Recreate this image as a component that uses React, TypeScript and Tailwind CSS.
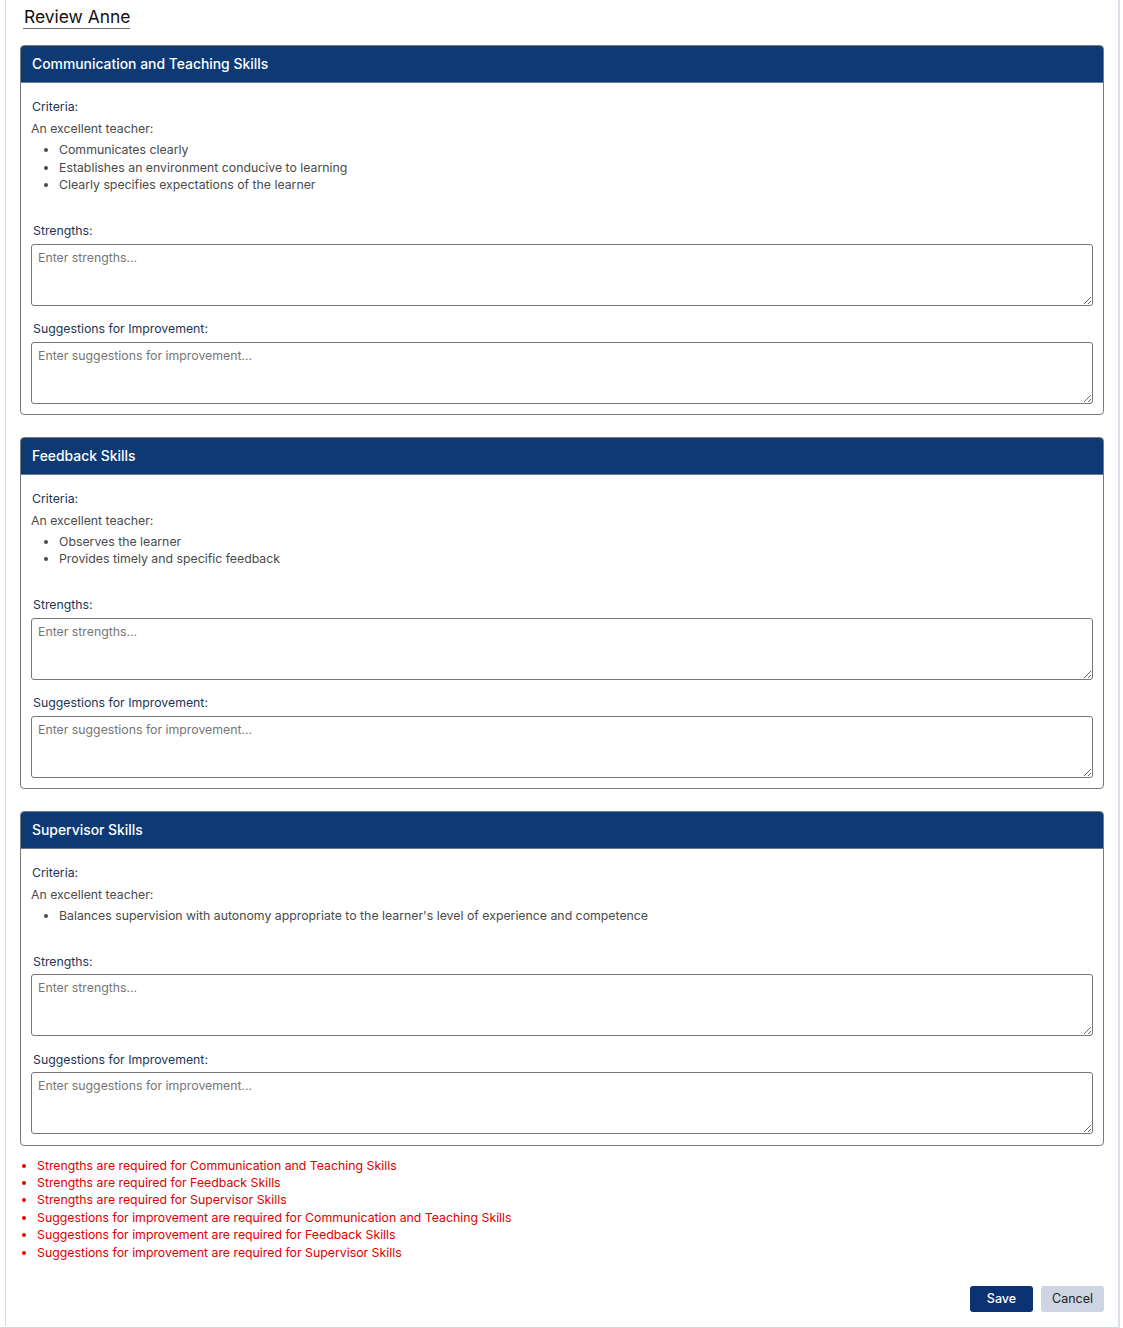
import React from "react";

type Section = { title: string; items: string[] };

const sections: Section[] = [
  {
    title: "Communication and Teaching Skills",
    items: [
      "Communicates clearly",
      "Establishes an environment conducive to learning",
      "Clearly specifies expectations of the learner",
    ],
  },
  {
    title: "Feedback Skills",
    items: ["Observes the learner", "Provides timely and specific feedback"],
  },
  {
    title: "Supervisor Skills",
    items: [
      "Balances supervision with autonomy appropriate to the learner's level of experience and competence",
    ],
  },
];

const errors = [
  "Strengths are required for Communication and Teaching Skills",
  "Strengths are required for Feedback Skills",
  "Strengths are required for Supervisor Skills",
  "Suggestions for improvement are required for Communication and Teaching Skills",
  "Suggestions for improvement are required for Feedback Skills",
  "Suggestions for improvement are required for Supervisor Skills",
];

function Card({ s }: { s: Section }) {
  return (
    <div className="border border-[#7a7a7a] rounded-[4px] overflow-hidden">
      <div className="bg-[#0d3a75] h-[37px] flex items-center px-[11px] border-b border-[#6f7a88]">
        <span className="text-white text-[13.9px] font-medium leading-[18px]">{s.title}</span>
      </div>
      <div className="px-[10px] pt-[15px] pb-[10.5px]">
        <div className="px-[1px] text-[12.3px] leading-[17.5px] text-[#1b3558]">Criteria:</div>
        <div className="mt-[4.5px] text-[12.3px] leading-[17.5px] text-[#4a4a4a]">An excellent teacher:</div>
        <ul className="mt-[3.5px] list-disc pl-[28px] text-[12.3px] leading-[17.5px] text-[#4a4a4a] marker:text-[#4a4a4a]">
          {s.items.map((it) => (
            <li key={it}>{it}</li>
          ))}
        </ul>
        <div className="mt-[28.5px] px-[2px] text-[12.3px] leading-[17.5px] text-[#1b3558]">Strengths:</div>
        <textarea
          className="mt-[4px] block w-full h-[62px] border border-[#767676] rounded-[3px] px-[6px] py-[4px] text-[12.3px] leading-[17.5px] text-[#222] placeholder:text-[#767676] outline-none"
          placeholder="Enter strengths..."
        />
        <div className="mt-[14.5px] px-[2px] text-[12.3px] leading-[17.5px] text-[#1b3558]">
          Suggestions for Improvement:
        </div>
        <textarea
          className="mt-[4px] block w-full h-[62px] border border-[#767676] rounded-[3px] px-[6px] py-[4px] text-[12.3px] leading-[17.5px] text-[#222] placeholder:text-[#767676] outline-none"
          placeholder="Enter suggestions for improvement..."
        />
      </div>
    </div>
  );
}

export default function App() {
  return (
    <div
      className="flex w-[1123px] bg-white"
      style={{ fontFamily: "Inter, 'Noto Sans', 'Liberation Sans', sans-serif" }}
    >
      <div className="w-[1118px] border-b border-[#d3d9e2]">
        <div className="ml-[5px] border-l border-[#d3d9e2] pr-[14px] pb-[14px]">
          <div className="pl-[17px] pt-[5px]">
            <h2 className="inline-block text-[17.4px] leading-[22px] font-normal text-[#111] border-b border-[#6b6b6b] pl-[1px]">
              Review Anne
            </h2>
          </div>
          <div className="pl-[14px] mt-[16px] flex flex-col gap-[21.5px]">
            {sections.map((s) => (
              <Card key={s.title} s={s} />
            ))}
          </div>
          <ul className="ml-[14px] mt-[11px] list-disc pl-[17px] text-[12.3px] leading-[17.4px] text-[#e00000] marker:text-[#e00000]">
            {errors.map((e) => (
              <li key={e}>{e}</li>
            ))}
          </ul>
          <div className="mt-[25px] flex justify-end gap-[8px]">
            <button className="w-[63px] h-[26px] rounded-[3px] bg-[#0b3272] text-white text-[12.5px] font-medium">
              Save
            </button>
            <button className="w-[63px] h-[26px] rounded-[3px] bg-[#ccd5e1] text-[#222] text-[12.5px]">
              Cancel
            </button>
          </div>
        </div>
      </div>
      <div className="w-[2px] bg-[#d8e0ec] min-h-[1328px]" />
    </div>
  );
}
